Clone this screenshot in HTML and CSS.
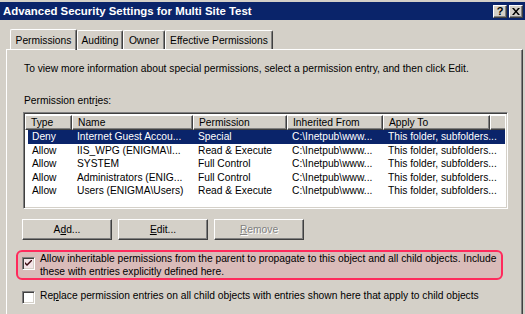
FILE: index.html
```html
<!DOCTYPE html>
<html lang="en">
<head>
    <meta charset="UTF-8">
    <title>Advanced Security Settings for Multi Site Test</title>
    <link rel="stylesheet" href="styles.css">
</head>
<body>
    <div class="window">
        <!-- Caption -->
        <div class="titlebar">
            <span class="title">Advanced Security Settings for Multi Site Test</span>
            <div class="caption-btns">
                <span class="cbtn">?</span>
                <span class="cbtn close">
                    <svg width="8" height="7" viewBox="0 0 8 7"><path d="M0 0h2l2 2.5 2-2.5h2l-3 3.5 3 3.5h-2l-2-2.5-2 2.5h-2l3-3.5z" fill="#000"/></svg>
                </span>
            </div>
        </div>

        <!-- Tabs -->
        <div class="tabs">
            <div class="tab active tab-perm">Permissions</div>
            <div class="tab tab-audit">Auditing</div>
            <div class="tab tab-owner">Owner</div>
            <div class="tab tab-eff">Effective Permissions</div>
        </div>

        <div class="panel">
            <p class="intro">To view more information about special permissions, select a permission entry, and then click Edit.</p>
            <p class="label">Permission entr<u>i</u>es:</p>

            <div class="listview">
                <div class="lv-head">
                    <div class="hcell">Type</div>
                    <div class="hcell">Name</div>
                    <div class="hcell">Permission</div>
                    <div class="hcell">Inherited From</div>
                    <div class="hcell">Apply To</div>
                    <div class="hcell last"></div>
                </div>
                <div class="lv-row selected">
                    <span>Deny</span><span>Internet Guest Accou...</span><span>Special</span><span>C:\Inetpub\www...</span><span>This folder, subfolders...</span>
                </div>
                <div class="lv-row">
                    <span>Allow</span><span>IIS_WPG (ENIGMA\I...</span><span>Read &amp; Execute</span><span>C:\Inetpub\www...</span><span>This folder, subfolders...</span>
                </div>
                <div class="lv-row">
                    <span>Allow</span><span>SYSTEM</span><span>Full Control</span><span>C:\Inetpub\www...</span><span>This folder, subfolders...</span>
                </div>
                <div class="lv-row">
                    <span>Allow</span><span>Administrators (ENIG...</span><span>Full Control</span><span>C:\Inetpub\www...</span><span>This folder, subfolders...</span>
                </div>
                <div class="lv-row">
                    <span>Allow</span><span>Users (ENIGMA\Users)</span><span>Read &amp; Execute</span><span>C:\Inetpub\www...</span><span>This folder, subfolders...</span>
                </div>
            </div>

            <div class="btn-row">
                <button class="btn">A<u>d</u>d...</button>
                <button class="btn"><u>E</u>dit...</button>
                <button class="btn" disabled><u>R</u>emove</button>
            </div>

            <div class="highlight">
                <label class="check">
                    <span class="box">
                        <svg width="7" height="7" viewBox="0 0 7 7"><path d="M0 2l2 2 5-5v2l-5 5-2-2z" fill="#3a0810"/></svg>
                    </span>
                    <span class="check-text">Allow inheritable permissions from the parent to propagate to this object and all child objects. Include these with entries explicitly defined here.</span>
                </label>
            </div>

            <label class="check plain">
                <span class="box"></span>
                <span class="check-text">Re<u>p</u>lace permission entries on all child objects with entries shown here that apply to child objects</span>
            </label>
        </div>
    </div>
</body>
</html>
```

FILE: styles.css
```css
:root {
    --face: #d4d0c8;
    --shadow: #808080;
    --dark: #404040;
    --caption: #0a246a;
    --select: #0a246a;
}

body {
    margin: 0;
    background: var(--face);
    font-family: 'Liberation Sans', Arial, sans-serif;
    font-size: 10.25px;
    color: #000;
    overflow: hidden;
}

.window {
    width: 525px;
    height: 314px;
    background-color: var(--face);
    background-image: radial-gradient(rgba(255, 255, 240, 0.35) 0.6px, transparent 0.7px);
    background-size: 2px 2px;
    padding-top: 2px;
    box-sizing: border-box;
}

/* caption bar */
.titlebar {
    height: 18px;
    background: var(--caption);
    display: flex;
    align-items: center;
    justify-content: space-between;
    padding: 0 2px 0 3px;
}

.title {
    color: #fff;
    font-weight: bold;
    font-size: 11.4px;
}

.caption-btns {
    display: flex;
    gap: 2px;
}

.cbtn {
    width: 14px;
    height: 13px;
    box-sizing: border-box;
    background: var(--face);
    border: 1px solid;
    border-color: #fff var(--dark) var(--dark) #fff;
    box-shadow: inset -1px -1px 0 var(--shadow);
    display: flex;
    align-items: center;
    justify-content: center;
    font-weight: bold;
    font-size: 11px;
    line-height: 1;
}

/* tab strip */
.tabs {
    display: flex;
    align-items: flex-end;
    height: 29px;
    padding-left: 10px;
    box-sizing: border-box;
}

.tab {
    height: 19px;
    box-sizing: border-box;
    border-top: 1px solid #fff;
    border-left: 1px solid #fff;
    border-right: 1px solid var(--dark);
    box-shadow: inset -1px 0 0 var(--shadow);
    border-radius: 2px 2px 0 0;
    display: flex;
    align-items: center;
    justify-content: center;
    padding-top: 1px;
}

.tab.active {
    height: 21px;
    margin-bottom: -1px;
    position: relative;
    z-index: 1;
    background: inherit;
}

.tab-perm { width: 67px; }
.tab-audit { width: 46px; }
.tab-owner { width: 42px; }
.tab-eff { width: 108px; }

/* tab page */
.panel {
    margin-left: 6px;
    width: 517px;
    height: 270px;
    box-sizing: border-box;
    border-top: 1px solid #fff;
    border-left: 1px solid #fff;
    border-right: 1px solid var(--dark);
    box-shadow: inset -1px 0 0 var(--shadow);
    padding: 12px 14px 0 16px;
}

.intro {
    margin: 0 0 0 1px;
    line-height: 13px;
}

.label {
    margin: 19px 0 0 1px;
    line-height: 13px;
}

/* list view */
.listview {
    margin-top: 5px;
    height: 97px;
    box-sizing: border-box;
    background: #fff;
    border: 1px solid;
    border-color: var(--shadow) #fff #fff var(--shadow);
    box-shadow: inset 1px 1px 0 var(--dark), inset -1px -1px 0 var(--face);
    padding: 2px 2px 0 2px;
}

.lv-head {
    display: grid;
    grid-template-columns: 47px 121px 94px 96px 107px 1fr;
    height: 15px;
    margin-left: -1px;
}

.hcell {
    background: var(--face);
    border-top: 1px solid #fff;
    border-left: 1px solid #fff;
    border-right: 1px solid var(--dark);
    border-bottom: 1px solid var(--dark);
    box-shadow: inset -1px -1px 0 var(--shadow);
    padding-left: 5px;
    line-height: 13px;
    white-space: nowrap;
    overflow: hidden;
}

.hcell.last {
    border-right: none;
    box-shadow: inset 0 -1px 0 var(--shadow);
}

.lv-row {
    display: grid;
    grid-template-columns: 45px 121px 94px 96px 1fr;
    height: 13.5px;
    line-height: 13px;
    margin-left: 2px;
    white-space: nowrap;
}

.lv-row span {
    padding-left: 4px;
    overflow: hidden;
}

.lv-row.selected {
    background: var(--select);
    color: #fff;
}

/* command buttons */
.btn-row {
    display: flex;
    gap: 6px;
    margin: 10px 0 0 -1px;
}

.btn {
    width: 90px;
    height: 21px;
    font: inherit;
    color: #000;
    background: var(--face);
    border: 1px solid;
    border-color: #fff var(--dark) var(--dark) #fff;
    box-shadow: inset -1px -1px 0 var(--shadow);
    padding: 0;
}

.btn:disabled {
    color: var(--shadow);
    text-shadow: 1px 1px 0 #fff;
}

/* checkboxes */
.highlight {
    margin: 10px 5px 0 -7px;
    height: 30px;
    box-sizing: border-box;
    border: 2px solid #ff2a5c;
    border-radius: 6px;
    background: rgba(255, 40, 80, 0.12);
    padding-left: 4px;
}

.check {
    display: flex;
    align-items: flex-start;
    gap: 5px;
    line-height: 13px;
}

.box {
    flex: none;
    width: 13px;
    height: 13px;
    box-sizing: border-box;
    margin-top: 5px;
    background: #fff;
    border: 1px solid;
    border-color: var(--shadow) #fff #fff var(--shadow);
    box-shadow: inset 1px 1px 0 var(--dark), inset -1px -1px 0 var(--face);
    display: flex;
    align-items: center;
    justify-content: center;
}

.highlight .box {
    background: #f4e4e8;
}

.check-text {
    width: 460px;
}

.check.plain {
    margin: 9px 0 0 -1px;
}

.check.plain .box {
    margin-top: 2px;
}
```
